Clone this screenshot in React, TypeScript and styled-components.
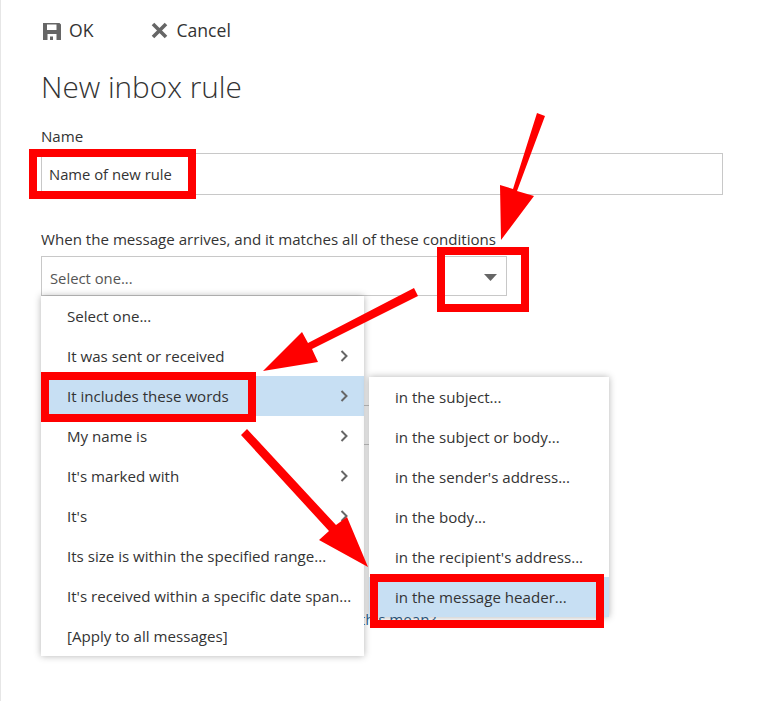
import * as React from "react";
import styled, { createGlobalStyle } from "styled-components";

const CONDITIONS = [
  { label: "Select one...", sub: false },
  { label: "It was sent or received", sub: true },
  { label: "It includes these words", sub: true, active: true },
  { label: "My name is", sub: true },
  { label: "It's marked with", sub: true },
  { label: "It's", sub: true },
  { label: "Its size is within the specified range...", sub: false },
  { label: "It's received within a specific date span...", sub: false },
  { label: "[Apply to all messages]", sub: false },
];

const WORD_OPTIONS = [
  { label: "in the subject..." },
  { label: "in the subject or body..." },
  { label: "in the sender's address..." },
  { label: "in the body..." },
  { label: "in the recipient's address..." },
  { label: "in the message header...", active: true },
];

const GlobalStyle = createGlobalStyle`
  html, body {
    margin: 0;
    padding: 0;
    background: #ffffff;
  }
`;

const Page = styled.div`
  box-sizing: border-box;
  position: relative;
  width: 766px;
  height: 701px;
  overflow: hidden;
  padding: 0 43px 0 40px;
  background: #ffffff;
  border-left: 1px solid #e6e6e6;
  color: #333333;
  font-family: "Open Sans", "Liberation Sans", sans-serif;
  font-size: 15.1px;
`;

const Toolbar = styled.div`
  display: flex;
  align-items: center;
  gap: 58px;
  height: 20px;
  padding: 20px 0 0 2px;
`;

const ToolButton = styled.div<{ $gap: number }>`
  display: flex;
  align-items: center;
  gap: ${(p) => p.$gap}px;
  font-size: 17.6px;
  line-height: 20px;
  color: #333333;
`;

const Title = styled.h1`
  margin: 27px 0 0;
  font-size: 29.7px;
  line-height: 40px;
  font-weight: 300;
  color: #333333;
`;

const Label = styled.div<{ $top: number }>`
  margin-top: ${(p) => p.$top}px;
  height: 20px;
  line-height: 20px;
  color: #333333;
`;

const TextBox = styled.div`
  box-sizing: border-box;
  display: flex;
  align-items: center;
  margin-top: 7px;
  height: 42px;
  padding-left: 7px;
  border: 1px solid #c8c8c8;
  font-size: 14.8px;
`;

const SelectBox = styled.div`
  box-sizing: border-box;
  display: flex;
  align-items: center;
  justify-content: space-between;
  margin-top: 7px;
  width: 466px;
  height: 40px;
  padding: 3px 9px 0 8px;
  border: 1px solid #c8c8c8;
  color: #555555;
  font-size: 14.8px;
`;

const BackgroundField = styled.div`
  box-sizing: border-box;
  margin-top: 109px;
  width: 466px;
  height: 40px;
  border: 1px solid #c8c8c8;
`;

const HelpLink = styled.div`
  margin: 164px 0 0 240px;
  line-height: 20px;
  color: #2b5f8f;
`;

const Menu = styled.div<{ $left: number; $top: number; $width: number }>`
  position: absolute;
  left: ${(p) => p.$left}px;
  top: ${(p) => p.$top}px;
  width: ${(p) => p.$width}px;
  background: #ffffff;
  box-shadow: 0 0 7px rgba(0, 0, 0, 0.3);
`;

const MenuItem = styled.div<{ $active?: boolean }>`
  box-sizing: border-box;
  display: flex;
  align-items: center;
  justify-content: space-between;
  height: 40px;
  padding: 0 15px 0 26px;
  background: ${(p) => (p.$active ? "#c7dff3" : "transparent")};
  color: #333333;
  white-space: nowrap;
`;

const Annotations = styled.svg`
  position: absolute;
  left: -1px;
  top: 0;
  pointer-events: none;
`;

const RedBox = styled.div<{ $x: number; $y: number; $w: number; $h: number }>`
  box-sizing: border-box;
  position: absolute;
  left: ${(p) => p.$x - 1}px;
  top: ${(p) => p.$y}px;
  width: ${(p) => p.$w}px;
  height: ${(p) => p.$h}px;
  border: 8px solid #ff0000;
`;

const SaveIcon = () => (
  <svg width="19" height="19" viewBox="0 0 19 19">
    <path
      fill="#666666"
      fillRule="evenodd"
      d="M0 2h16.5L18 3.5V19H0V2zM4 3.5V9h9.5V3.5H4zM4.5 13v6h2.5v-3.5h3V19h3.5v-6H4.5z"
    />
  </svg>
);

const CloseIcon = () => (
  <svg width="17" height="17" viewBox="0 0 17 17">
    <path d="M2 2l13 13M15 2L2 15" stroke="#666666" strokeWidth="3.6" fill="none" />
  </svg>
);

const Caret = () => (
  <svg width="13" height="7" viewBox="0 0 13 7">
    <path d="M0 0h13L6.5 7z" fill="#666666" />
  </svg>
);

const Chevron = () => (
  <svg width="9" height="12" viewBox="0 0 9 12">
    <path d="M1.5 1l5 5-5 5" stroke="#666666" strokeWidth="2" fill="none" />
  </svg>
);

const App: React.FC = () => (
  <Page>
    <GlobalStyle />
    <Toolbar>
      <ToolButton $gap={7}><SaveIcon />OK</ToolButton>
      <ToolButton $gap={8}><CloseIcon />Cancel</ToolButton>
    </Toolbar>
    <Title>New inbox rule</Title>
    <Label $top={19}>Name</Label>
    <TextBox>Name of new rule</TextBox>
    <Label $top={34}>When the message arrives, and it matches all of these conditions</Label>
    <SelectBox>Select one...<Caret /></SelectBox>
    <BackgroundField />
    <HelpLink>What does this mean?</HelpLink>

    <Menu $left={40} $top={296} $width={323}>
      {CONDITIONS.map((item) => (
        <MenuItem key={item.label} $active={item.active}>
          {item.label}
          {item.sub && <Chevron />}
        </MenuItem>
      ))}
    </Menu>
    <Menu $left={368} $top={377} $width={240}>
      {WORD_OPTIONS.map((item) => (
        <MenuItem key={item.label} $active={item.active}>{item.label}</MenuItem>
      ))}
    </Menu>

    <RedBox $x={29} $y={149} $w={167} $h={50} />
    <RedBox $x={437} $y={247} $w={92} $h={65} />
    <RedBox $x={41} $y={372} $w={215} $h={50} />
    <RedBox $x={370} $y={574} $w={234} $h={54} />

    <Annotations width="766" height="701" viewBox="0 0 766 701">
      <path fill="#ff0000" d="M537 113L545 116L517 191L534 196L501 240L500 185L513 189Z" />
      <path fill="#ff0000" d="M414 288L418 296L312 349L318 362L263 371L302 332L308 343Z" />
      <path fill="#ff0000" d="M247 429L241 435L329 531L319 540L368 567L347 517L336 525Z" />
    </Annotations>
  </Page>
);

export default App;
